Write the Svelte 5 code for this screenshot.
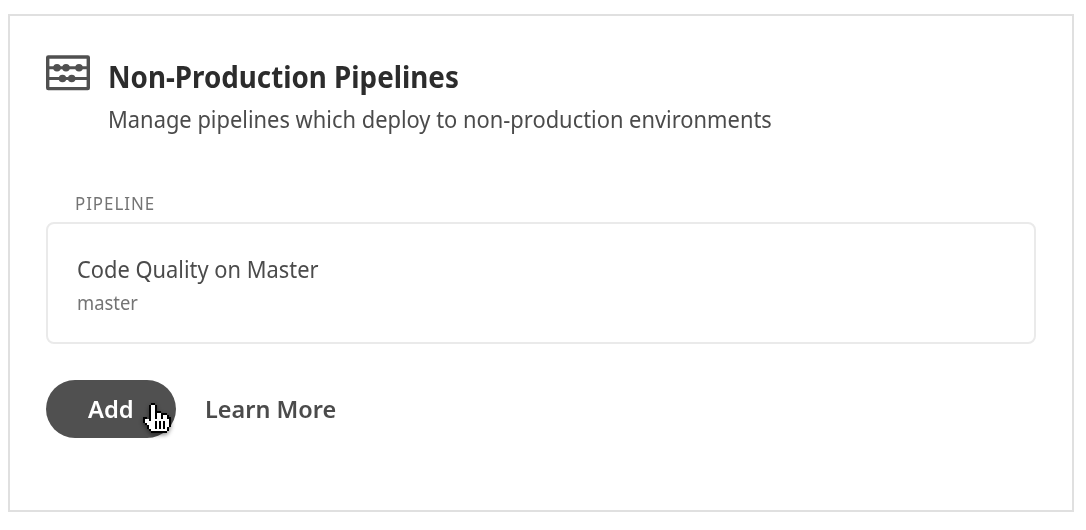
<script>
  const pipelines = [{ name: 'Code Quality on Master', branch: 'master' }];
  const hand = [
    '....##........',
    '...#oo#.......',
    '...#oo#.......',
    '...#oo#.......',
    '...#oo###.....',
    '...#oo#oo###..',
    '...#oo#oo#oo#.',
    '##.#oo#oo#oo##',
    '#oo#ooooooooo#',
    '#ooooo#o#o#oo#',
    '.#oooo#o#o#oo#',
    '..#ooo#o#o#oo#',
    '..#ooo#o#o#o#.',
    '...#oooooooo#.',
    '....########..'
  ];
  const cells = hand.flatMap((row, y) => [...row].map((c, x) => ({ x, y, c }))).filter((p) => p.c !== '.');
</script>

<section class="card">
  <header>
    <svg class="abacus" width="44" height="36" viewBox="0 0 44 36">
      <rect x="1.7" y="2" width="40.6" height="31.6" rx=".6" fill="none" stroke="#505050" stroke-width="3.4" />
      <path d="M2 12.8H42M2 23.5H42" stroke="#505050" stroke-width="3" />
      <g fill="#505050">
        <circle cx="11" cy="12.8" r="3.8" /><circle cx="20" cy="12.8" r="3.8" /><circle cx="33" cy="12.8" r="3.8" />
        <circle cx="16.5" cy="23.5" r="3.8" /><circle cx="25.7" cy="23.5" r="3.8" />
      </g>
    </svg>
    <div class="heading">
      <h2><span>Non-Production Pipelines</span></h2>
      <p><span>Manage pipelines which deploy to non-production environments</span></p>
    </div>
  </header>
  <div class="label"><span>PIPELINE</span></div>
  {#each pipelines as p}
    <article class="pipeline">
      <div class="name"><span>{p.name}</span></div>
      <div class="branch"><span>{p.branch}</span></div>
    </article>
  {/each}
  <footer>
    <button class="add"><span>Add</span>
      <svg class="cursor" width="28" height="30" viewBox="0 0 14 15" shape-rendering="crispEdges">
        {#each cells as c}<rect x={c.x} y={c.y} width="1" height="1" fill={c.c === '#' ? '#000' : '#fff'} />{/each}
      </svg>
    </button>
    <button class="learn"><span>Learn More</span></button>
  </footer>
</section>

<style>
  :global(body) { background: #fff; }
  .card { box-sizing: border-box; width: 1066px; height: 498px; margin: 14px 0 0 8px; border: 2px solid #e0e0e0; padding: 39px 36px 0; font-family: "Noto Sans", sans-serif; color: #4b4b4b; }
  span { display: inline-block; transform-origin: left center; white-space: nowrap; }
  header { display: flex; gap: 18px; height: 137px; }
  h2, p { margin: 0; white-space: nowrap; }
  h2 { font-size: 30px; line-height: 44px; font-weight: 700; color: #2c2c2c; }
  h2 span { transform: scaleX(.925); }
  p { font-size: 23.5px; line-height: 40px; }
  p span { transform: scaleX(.931); }
  .label { height: 29px; padding-left: 29px; font-size: 17.5px; line-height: 23px; color: #747474; letter-spacing: 1px; }
  .label span { transform: scaleX(.965); }
  .pipeline { box-sizing: border-box; width: 990px; height: 122px; border: 2px solid #eaeaea; border-radius: 8px; padding: 27px 29px; margin-top: 1px; white-space: nowrap; }
  .name { font-size: 23.5px; line-height: 36px; }
  .name span { transform: scaleX(.93); }
  .branch { font-size: 20px; line-height: 32px; color: #747474; }
  .branch span { transform: scaleX(.92); }
  footer { display: flex; margin-top: 36px; gap: 29px; }
  button { border: 0; height: 58px; padding: 0 0 1px; font: 600 24px "Noto Sans", sans-serif; white-space: nowrap; }
  .add { position: relative; width: 130px; border-radius: 29px; background: #505050; color: #fff; text-align: left; padding-left: 42px; }
  .add span { transform: scaleX(.99); }
  .learn { background: none; color: #4b4b4b; }
  .learn span { transform: scaleX(.977); }
  .cursor { position: absolute; left: 97px; top: 23px; filter: drop-shadow(0 2px 2px rgba(0, 0, 0, .45)); }
</style>
